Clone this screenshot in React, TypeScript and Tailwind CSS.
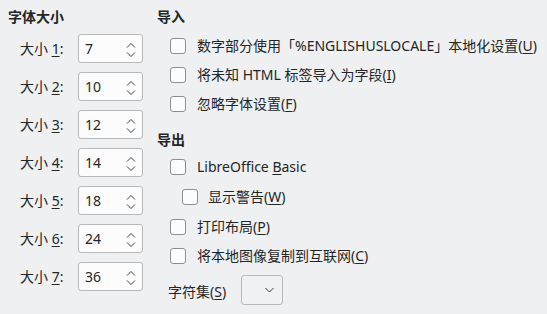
import React from "react";

const FONT = { fontFamily: '"Noto Sans", "Noto Sans CJK SC", sans-serif' };

const SIZES = [
  { n: "1", v: "7" },
  { n: "2", v: "10" },
  { n: "3", v: "12" },
  { n: "4", v: "14" },
  { n: "5", v: "18" },
  { n: "6", v: "24" },
  { n: "7", v: "36" },
];

function SpinBox({ value }: { value: string }) {
  return (
    <div className="relative w-[65px] h-[29px] rounded-[3px] border border-[#b7b9bb] bg-[#fcfcfc] flex items-center pl-[6px]">
      <span>{value}</span>
      <svg className="absolute left-[47px] top-[5px]" width="10" height="18" viewBox="0 0 10 18" fill="none" stroke="#3b3e40" strokeWidth="1">
        <path d="M1 7.5 L5 3.5 L9 7.5" />
        <path d="M1 12.5 L5 16.5 L9 12.5" />
      </svg>
    </div>
  );
}

function Check({ children, indent = false }: { children: React.ReactNode; indent?: boolean }) {
  return (
    <div className={`flex items-center ${indent ? "pl-[25px] gap-[10px]" : "pl-[13px] gap-[11px]"}`}>
      <div className="w-[16px] h-[16px] rounded-[3px] border border-[#8d8f91] bg-[#fcfcfc]" />
      <span>{children}</span>
    </div>
  );
}

export default function App() {
  return (
    <div className="w-[547px] h-[314px] bg-[#eff0f1] text-[#232627] text-[14px] flex" style={FONT}>
      {/* Font sizes */}
      <div className="w-[157px] pt-[8px] pl-[8px]">
        <div className="h-[18px] leading-[18px] font-bold">字体大小</div>
        <div className="mt-[8px] flex flex-col gap-[9px]">
          {SIZES.map((s) => (
            <div key={s.n} className="h-[29px] flex items-center pl-[12px]">
              <span className="w-[58px]">
                大小 <span className="underline underline-offset-2">{s.n}</span>:
              </span>
              <SpinBox value={s.v} />
            </div>
          ))}
        </div>
      </div>

      {/* Import / Export */}
      <div className="flex-1 pt-[8px]">
        <div className="h-[18px] leading-[18px] font-bold">导入</div>
        <div className="mt-[5px] flex flex-col">
          <div className="h-[29px] flex items-center">
            <Check>
              数字部分使用「%ENGLISHUSLOCALE」本地化设置(<span className="underline underline-offset-2">U</span>)
            </Check>
          </div>
          <div className="h-[29px] flex items-center">
            <Check>
              将未知 HTML 标签导入为字段(<span className="underline underline-offset-2">I</span>)
            </Check>
          </div>
          <div className="h-[29px] flex items-center">
            <Check>
              忽略字体设置(<span className="underline underline-offset-2">F</span>)
            </Check>
          </div>
        </div>

        <div className="mt-[13px] h-[18px] leading-[18px] font-bold">导出</div>
        <div className="mt-[3px] flex flex-col">
          <div className="h-[29px] flex items-center">
            <Check>
              LibreOffice <span className="underline underline-offset-2">B</span>asic
            </Check>
          </div>
          <div className="h-[31px] flex items-center">
            <Check indent>
              显示警告(<span className="underline underline-offset-2">W</span>)
            </Check>
          </div>
          <div className="h-[29px] flex items-center">
            <Check>
              打印布局(<span className="underline underline-offset-2">P</span>)
            </Check>
          </div>
          <div className="h-[29px] flex items-center">
            <Check>
              将本地图像复制到互联网(<span className="underline underline-offset-2">C</span>)
            </Check>
          </div>
          <div className="mt-[5px] h-[30px] flex items-center pl-[11px]">
            <span className="w-[73px] pt-[3px]">
              字符集(<span className="underline underline-offset-2">S</span>)
            </span>
            <div className="w-[42px] h-[30px] rounded-[3px] border border-[#b7b9bb] bg-[#f0f1f2] flex items-center justify-end pr-[8px]">
              <svg width="9" height="6" viewBox="0 0 9 6" fill="none" stroke="#3b3e40" strokeWidth="1">
                <path d="M0.5 1 L4.5 5 L8.5 1" />
              </svg>
            </div>
          </div>
        </div>
      </div>
    </div>
  );
}
